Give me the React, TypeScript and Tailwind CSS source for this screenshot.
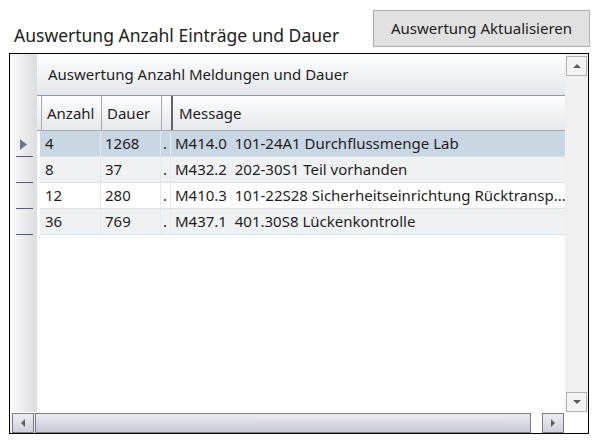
type Row = { anzahl: string; dauer: string; msg: string }

const rows: Row[] = [
  { anzahl: '4', dauer: '1268', msg: 'M414.0  101-24A1 Durchflussmenge Lab' },
  { anzahl: '8', dauer: '37', msg: 'M432.2  202-30S1 Teil vorhanden' },
  { anzahl: '12', dauer: '280', msg: 'M410.3  101-22S28 Sicherheitseinrichtung Rücktransp...' },
  { anzahl: '36', dauer: '769', msg: 'M437.1  401.30S8 Lückenkontrolle' },
]

const rowBg = ['bg-[#c9d6e3]', 'bg-[#f0f1f3]', 'bg-white', 'bg-[#f0f1f3]']

function Arrow({ dir }: { dir: 'up' | 'down' | 'left' | 'right' }) {
  const pts = {
    up: '1,6 5,2 9,6',
    down: '1,2 5,6 9,2',
    left: '6,1 2,5 6,9',
    right: '2,1 6,5 2,9',
  }[dir]
  const vert = dir === 'up' || dir === 'down'
  return (
    <svg width={vert ? 10 : 8} height={vert ? 8 : 10} viewBox={vert ? '0 0 10 8' : '0 0 8 10'}>
      <polygon points={pts} fill="#5f5f5f" />
    </svg>
  )
}

export default function App() {
  return (
    <div
      className="w-[600px] h-[444px] bg-white text-[#1e1e1e] overflow-hidden"
      style={{ fontFamily: '"Noto Sans", "Open Sans", sans-serif' }}
    >
      {/* top bar */}
      <div className="flex h-[53px]">
        <div className="pl-[14px] pt-[23px] text-[17.5px] leading-[24px] text-[#222]">
          Auswertung Anzahl Einträge und Dauer
        </div>
        <button className="ml-auto mr-[10px] mt-[10px] w-[217px] h-[37px] bg-[#e1e1e1] border border-[#adadad] text-[15px] text-[#222]">
          Auswertung Aktualisieren
        </button>
      </div>

      {/* grid */}
      <div className="ml-[9px] w-[580px] h-[381px] border border-black flex flex-col">
        <div className="flex h-[358px]">
          {/* row header strip */}
          <div className="w-[27px] shrink-0 bg-gradient-to-r from-[#fbfbfb] to-[#dcdde0] flex flex-col">
            <div className="h-[77px]" />
            {rows.map((_, i) => (
              <div key={i} className="h-[26px] relative flex items-center">
                {i === 0 && (
                  <svg className="ml-[10px]" width="7" height="11" viewBox="0 0 7 11">
                    <polygon points="0,0 7,5.5 0,11" fill="#6a7890" />
                  </svg>
                )}
                <div className="absolute left-[6px] bottom-0 w-[17px] h-[1px] bg-[#4e5d78]" />
              </div>
            ))}
          </div>

          {/* content */}
          <div className="w-[528px] shrink-0 flex flex-col text-[15px]">
            <div className="h-[42px] bg-gradient-to-b from-[#ffffff] to-[#e3e7eb] border-b border-[#8f9aa6] flex items-center pl-[11px]">
              Auswertung Anzahl Meldungen und Dauer
            </div>
            <div className="h-[35px] bg-gradient-to-b from-[#fdfdfe] to-[#e6e9ed] border-b border-[#a4adb7] flex items-stretch pl-[4px]">
              <div className="w-[60px] border-l border-[#a9a9a9] flex items-center pl-[5px]">Anzahl</div>
              <div className="w-[60px] border-l border-[#a9a9a9] flex items-center pl-[5px]">Dauer</div>
              <div className="w-[10px] border-l border-[#a9a9a9]" />
              <div className="flex-1 border-l-2 border-[#5e6474] flex items-center pl-[6px]">Message</div>
            </div>
            {rows.map((r, i) => (
              <div key={i} className={`h-[26px] ml-[3px] flex border-b border-[#dde2e7] ${rowBg[i]}`}>
                <div className="w-[61px] pl-[5px] flex items-center border-r border-[#e4e9ef]">{r.anzahl}</div>
                <div className="w-[60px] pl-[4px] flex items-center border-r border-[#e4e9ef]">{r.dauer}</div>
                <div className="w-[10px] pl-[2px] flex items-center border-r border-[#e4e9ef]">.</div>
                <div className="flex-1 min-w-0 pl-[4px] flex items-center overflow-hidden">
                  <span className="whitespace-pre">{r.msg}</span>
                </div>
              </div>
            ))}
            <div className="flex-1 bg-white" />
          </div>

          {/* vertical scrollbar */}
          <div className="flex-1 bg-[#f0f0f0] flex flex-col items-center pt-[2px]">
            <div className="w-[21px] h-[20px] border border-[#b4b4b4] bg-[#f3f3f3] flex items-center justify-center">
              <Arrow dir="up" />
            </div>
            <div className="flex-1" />
            <div className="w-[21px] h-[20px] border border-[#b4b4b4] bg-[#f3f3f3] flex items-center justify-center">
              <Arrow dir="down" />
            </div>
          </div>
        </div>

        {/* horizontal scrollbar */}
        <div className="flex-1 flex items-stretch pt-[1px]">
          <div className="w-[554px] flex bg-[#f0f0f4] pl-[2px]">
            <div className="w-[22px] border border-[#7c7c7c] bg-gradient-to-b from-[#eeeef4] to-[#cfd0dc] flex items-center justify-center">
              <Arrow dir="left" />
            </div>
            <div className="w-[496px] ml-[1px] border border-[#7c7c7c] bg-gradient-to-b from-[#ececf3] to-[#c6c7d7]" />
            <div className="flex-1 bg-white" />
            <div className="w-[22px] border border-[#7c7c7c] bg-gradient-to-b from-[#eeeef4] to-[#cfd0dc] flex items-center justify-center">
              <Arrow dir="right" />
            </div>
          </div>
          <div className="flex-1 bg-white" />
        </div>
      </div>
    </div>
  )
}
